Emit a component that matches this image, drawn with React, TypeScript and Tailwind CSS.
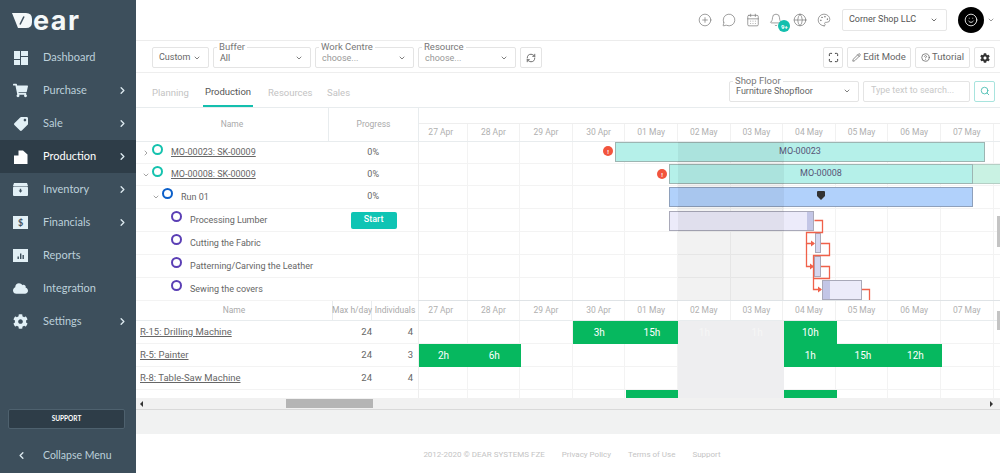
import {
  Bell,
  CalendarDays,
  ChevronDown,
  ChevronLeft,
  ChevronRight,
  CirclePlus,
  Globe,
  CircleHelp,
  Maximize,
  MessageCircle,
  Palette,
  Pencil,
  RefreshCw,
  Search,
  Smile,
} from 'lucide-react';
import { FaCloud, FaCog, FaShoppingCart, FaTag } from 'react-icons/fa';
import type { ReactNode } from 'react';

const plex = "font-['Roboto','Noto_Sans',sans-serif]";

const DashboardIcon = () => (
  <svg width="14" height="14" viewBox="0 0 14 14" fill="#e2f0f6">
    <rect x="0" y="0" width="6" height="8" />
    <rect x="7" y="0" width="7" height="5" />
    <rect x="7" y="6" width="7" height="8" />
    <rect x="0" y="9" width="6" height="5" />
  </svg>
);

const ProductionIcon = () => (
  <svg width="14" height="14" viewBox="0 0 14 14" fill="#fff">
    <path d="M0 5.5 L4.5 5.5 L4.5 0.5 L9 0.5 L13.5 4.5 L13.5 14 L0 14 Z" />
  </svg>
);

const InventoryIcon = () => (
  <svg width="15" height="13" viewBox="0 0 15 13">
    <path d="M1 0 H14 L15 3 H0 Z" fill="#e2f0f6" />
    <rect x="0" y="3.6" width="15" height="9.4" rx="1" fill="#e2f0f6" />
    <path d="M7.5 9.8 L5.6 7.6 H6.8 V5.8 H8.2 V7.6 H9.4 Z" fill="#3d4f5c" />
  </svg>
);

const FinancialsIcon = () => (
  <div className="w-[15px] h-[13px] bg-[#e2f0f6] flex items-center justify-center text-[9px] font-bold leading-none text-[#3d4f5c]">
    $
  </div>
);

const ReportsIcon = () => (
  <svg width="15" height="13" viewBox="0 0 15 13">
    <rect width="15" height="13" fill="#e2f0f6" />
    <rect x="4.5" y="7.5" width="1.4" height="2.5" fill="#3d4f5c" />
    <rect x="7" y="4.5" width="1.4" height="5.5" fill="#3d4f5c" />
    <rect x="9.5" y="6" width="1.4" height="4" fill="#3d4f5c" />
  </svg>
);

const navItems: { label: string; icon: ReactNode; arrow?: boolean; active?: boolean }[] = [
  { label: 'Dashboard', icon: <DashboardIcon /> },
  { label: 'Purchase', icon: <FaShoppingCart size={15} color="#e2f0f6" />, arrow: true },
  { label: 'Sale', icon: <FaTag size={14} color="#e2f0f6" className="-scale-x-100" />, arrow: true },
  { label: 'Production', icon: <ProductionIcon />, arrow: true, active: true },
  { label: 'Inventory', icon: <InventoryIcon />, arrow: true },
  { label: 'Financials', icon: <FinancialsIcon />, arrow: true },
  { label: 'Reports', icon: <ReportsIcon /> },
  { label: 'Integration', icon: <FaCloud size={15} color="#e2f0f6" /> },
  { label: 'Settings', icon: <FaCog size={15} color="#e2f0f6" />, arrow: true },
];

function Sidebar() {
  return (
    <aside className="w-[136px] shrink-0 h-full bg-[#3d4f5c] flex flex-col font-['Lato',sans-serif]">
      <div className="h-[41px] flex items-start pl-[12px] pt-[10px] gap-[1px]">
        <svg width="20" height="15" viewBox="0 0 20 15" className="mt-[3px]">
          <path d="M0 0 H14 Q20 0 20 6 V9 Q20 15 14 15 H6 Z" fill="#f4f8f9" />
          <path d="M12 3.5 L8 11.5" stroke="#3d4f5c" strokeWidth="1.6" />
        </svg>
        <span className="font-['Inter',sans-serif] text-[27px] leading-[22px] font-bold text-[#f4f8f9] tracking-[1.5px]">ear</span>
      </div>
      <nav className="flex flex-col">
        {navItems.map((item) => (
          <div
            key={item.label}
            className={`h-[33px] flex items-center text-[11px] ${item.active ? 'bg-[#2e3d48] text-white' : 'text-[#bcd0da]'}`}
          >
            <div className="w-[43px] flex items-center justify-center pr-[2px]">{item.icon}</div>
            <span className="flex-1">{item.label}</span>
            {item.arrow && <ChevronRight size={11} strokeWidth={3} color="#dbe8ee" className="mr-[8px]" />}
          </div>
        ))}
      </nav>
      <div className="mt-auto ml-[8px] mr-[11px] h-[20px] rounded-[2px] bg-[#2e3d48] border border-[#4e616e] flex items-center justify-center text-[6.5px] font-bold text-white">
        SUPPORT
      </div>
      <div className="h-[36px] mt-[8px] pt-[1px] flex items-center text-[10.5px] text-[#bcd0da]">
        <div className="w-[43px] flex justify-center">
          <ChevronLeft size={11} strokeWidth={3} color="#dbe8ee" />
        </div>
        Collapse Menu
      </div>
    </aside>
  );
}

function TopBar() {
  return (
    <header className="h-[41px] shrink-0 border-b border-[#ececec] flex items-center justify-end text-[#777]">
      <div className="flex items-center gap-[9.8px] mr-[11px]">
        <CirclePlus size={14} strokeWidth={1.2} />
        <MessageCircle size={14} strokeWidth={1.2} />
        <CalendarDays size={14} strokeWidth={1.2} />
        <div className="relative">
          <Bell size={14} strokeWidth={1.2} />
          <span className="absolute -right-[7px] -bottom-[5px] w-[12px] h-[12px] rounded-full bg-[#14bfae] text-white text-[6px] font-bold flex items-center justify-center">
            9+
          </span>
        </div>
        <Globe size={14} strokeWidth={1.2} />
        <Palette size={14} strokeWidth={1.2} />
      </div>
      <div className="w-[105px] h-[22px] border border-[#e6e6e6] rounded-[2px] flex items-center justify-between pl-[6px] pr-[8px] text-[9px] text-[#555]">
        Corner Shop LLC
        <ChevronDown size={8} strokeWidth={2.5} />
      </div>
      <div className="w-[26px] h-[26px] ml-[11px] rounded-full bg-black flex items-center justify-center">
        <Smile size={14} color="#e8e8e8" strokeWidth={1.6} />
      </div>
      <ChevronDown size={8} strokeWidth={2.5} className="ml-[3px] mr-[5px] text-[#888]" />
    </header>
  );
}

function LegendSelect({ label, value, width, faded }: { label?: string; value: string; width: string; faded?: boolean }) {
  return (
    <div className={`relative ${width} h-[21px] border border-[#e4e4e4] rounded-[2px] flex items-center justify-between pl-[6px] pr-[7px]`}>
      {label && (
        <span className="absolute left-[3px] -top-[6px] bg-white px-[2px] text-[9.5px] leading-[10px] text-[#777]">{label}</span>
      )}
      <span className={`text-[9px] ${label ? 'pt-[2px]' : ''} ${faded ? 'text-[#999]' : 'text-[#666]'}`}>{value}</span>
      <ChevronDown size={8} strokeWidth={2.5} className="text-[#666]" />
    </div>
  );
}

function ToolBar() {
  return (
    <div className="h-[32px] shrink-0 border-b border-[#eeeeee] flex items-center pl-[16px] pr-[5px] pt-[2px]">
      <div className="flex items-center gap-[4px]">
        <LegendSelect value="Custom" width="w-[57px]" />
        <LegendSelect label="Buffer" value="All" width="w-[98px]" />
        <LegendSelect label="Work Centre" value="choose..." width="w-[99px]" faded />
        <LegendSelect label="Resource" value="choose..." width="w-[98px]" faded />
        <div className="w-[22px] h-[21px] border border-[#e4e4e4] rounded-[2px] flex items-center justify-center text-[#555]">
          <RefreshCw size={10} />
        </div>
      </div>
      <div className="ml-auto flex items-center gap-[4px] text-[9.5px] text-[#666]">
        <div className="w-[20px] h-[21px] border border-[#e4e4e4] rounded-[2px] flex items-center justify-center text-[#333]">
          <Maximize size={11} />
        </div>
        <div className="w-[64px] h-[21px] border border-[#e4e4e4] rounded-[2px] flex items-center justify-center gap-[2px]">
          <Pencil size={9} />
          Edit Mode
        </div>
        <div className="w-[55px] h-[21px] border border-[#e4e4e4] rounded-[2px] flex items-center justify-center gap-[2px]">
          <CircleHelp size={9} />
          Tutorial
        </div>
        <div className="w-[21px] h-[21px] border border-[#e4e4e4] rounded-[2px] flex items-center justify-center text-[#333]">
          <FaCog size={10} />
        </div>
      </div>
    </div>
  );
}

function TabsBar() {
  return (
    <div className="h-[35px] shrink-0 border-b border-[#e8ecee] flex pl-[16px] pr-[5px] text-[9.5px] text-[#c3c3c3]">
      <div className="flex gap-[13px] items-stretch">
        <span className="w-[38px] flex items-center pt-[6px]">Planning</span>
        <span className="w-[50px] flex items-center justify-center pt-[6px] text-[#555] border-b-2 border-[#14bfae]">Production</span>
        <span className="w-[42px] ml-[2px] flex items-center pt-[6px]">Resources</span>
        <span className="ml-[4px] flex items-center pt-[6px]">Sales</span>
      </div>
      <div className="ml-auto flex items-center gap-[4px] pt-[2px]">
        <div className="w-[130px]">
          <LegendSelect label="Shop Floor" value="Furniture Shopfloor" width="w-[130px]" />
        </div>
        <div className="w-[107px] h-[21px] border border-[#e4e4e4] rounded-[2px] flex items-center pl-[7px] text-[9px] text-[#c8c8c8]">
          Type text to search...
        </div>
        <div className="w-[21px] h-[21px] border border-[#a8e4de] rounded-[2px] flex items-center justify-center text-[#3fb9ad]">
          <Search size={10} />
        </div>
      </div>
    </div>
  );
}

const days = ['27 Apr', '28 Apr', '29 Apr', '30 Apr', '01 May', '02 May', '03 May', '04 May', '05 May', '06 May', '07 May'];

function DayLabels({ className }: { className: string }) {
  return (
    <div className={`flex -ml-[4px] ${className}`}>
      {days.map((d) => (
        <div key={d} className="w-[52.6px] shrink-0 flex items-center justify-center border-r border-[#f1f1f1] text-[8.5px] text-[#b0b0b0]">
          {d}
        </div>
      ))}
    </div>
  );
}

function GridLines() {
  return (
    <div className="absolute inset-0 flex -ml-[4px]">
      {days.map((d) => (
        <div key={d} className="w-[52.6px] shrink-0 border-r border-[#f3f3f3]" />
      ))}
    </div>
  );
}

const taskRows = [
  { h: 'h-[22px]', name: 'MO-00023: SK-00009', pl: 'pl-[6px]', ring: 'border-[#14c2ae]', chevron: 'right', link: true, progress: '0%' },
  { h: 'h-[22px]', name: 'MO-00008: SK-00009', pl: 'pl-[6px]', ring: 'border-[#14c2ae]', chevron: 'down', link: true, progress: '0%' },
  { h: 'h-[23px]', name: 'Run 01', pl: 'pl-[16px]', ring: 'border-[#0b5fc9]', chevron: 'down', progress: '0%' },
  { h: 'h-[23px]', name: 'Processing Lumber', pl: 'pl-[35px]', ring: 'border-[#5b3fb5]', start: true },
  { h: 'h-[23px]', name: 'Cutting the Fabric', pl: 'pl-[35px]', ring: 'border-[#5b3fb5]' },
  { h: 'h-[23px]', name: 'Patterning/Carving the Leather', pl: 'pl-[35px]', ring: 'border-[#5b3fb5]' },
  { h: 'h-[23px]', name: 'Sewing the covers', pl: 'pl-[35px]', ring: 'border-[#5b3fb5]' },
];

function TaskRow({ row }: { row: (typeof taskRows)[number] }) {
  return (
    <div className={`${row.h} flex items-center border-b border-[#f3f3f3] text-[9px] text-[#666]`}>
      <div className={`w-[193px] flex items-center ${row.pl}`}>
        {row.chevron && (
          <span className="w-[10px] text-[#777]">
            {row.chevron === 'right' ? <ChevronRight size={8} strokeWidth={2} /> : <ChevronDown size={8} strokeWidth={2} />}
          </span>
        )}
        <span className={`w-[11px] h-[11px] rounded-full border-[2.5px] mb-[7px] ${row.ring}`} />
        <span className={`ml-[8px] pt-[1px] ${row.link ? 'underline' : ''}`}>{row.name}</span>
      </div>
      <div className="w-[90px] flex items-center justify-center">
        {row.progress}
        {row.start && (
          <span className="w-[46px] h-[17px] ml-[1px] rounded-[2px] bg-[#0fc4b4] text-white flex items-center justify-center font-medium">Start</span>
        )}
      </div>
    </div>
  );
}

function Alert({ className }: { className: string }) {
  return (
    <span className={`absolute w-[10px] h-[10px] rounded-full bg-[#f2543d] text-white text-[6px] font-bold flex items-center justify-center ${className}`}>
      !
    </span>
  );
}

const RED = '#f0614a';

function TaskChart() {
  return (
    <div className="relative flex-1 overflow-hidden">
      <GridLines />
      <div className="absolute inset-0">
        {taskRows.map((r) => (
          <div key={r.name} className={`${r.h} border-b border-[#f3f3f3]`} />
        ))}
      </div>
      <Alert className="left-[184px] top-[4px]" />
      <div className="absolute left-[196px] top-0 w-[370px] h-[20px] bg-[#b5f0e9] border border-[#9db5b2] flex items-center justify-center text-[9px] text-[#557]">
        MO-00023
      </div>
      <Alert className="left-[238px] top-[27px]" />
      <div className="absolute left-[250px] top-[22px] w-[304px] h-[20px] bg-[#b5f0e9] border border-[#9db5b2] flex items-center justify-center text-[9px] text-[#557]">
        MO-00008
      </div>
      <div className="absolute left-[554px] top-[22px] w-[40px] h-[20px] bg-[#c9f2e3] border-y border-[#b5cfc5]" />
      <div className="absolute left-[250px] top-[45px] w-[304px] h-[20px] bg-[#b1d1fb] border border-[#8ea0bb] flex items-center justify-center pb-[3px]">
        <svg width="8" height="9" viewBox="0 0 8 9">
          <path d="M0 1 Q0 0 1 0 H7 Q8 0 8 1 V5 L4 9 L0 5 Z" fill="#333" />
        </svg>
      </div>
      <div className="absolute left-[250px] top-[69px] w-[145px] h-[20px] bg-[#ecebfa] border border-[#a9a9b9] flex justify-end">
        <div className="w-[6px] h-full bg-[#c3c6e6]" />
      </div>
      <div className="absolute left-[396px] top-[91px] w-[6px] h-[20px] bg-[#d5d7f0] border border-[#a9a9b9]" />
      <div className="absolute left-[395px] top-[114px] w-[7px] h-[21px] bg-[#d5d7f0] border border-[#a9a9b9]" />
      <div className="absolute left-[403px] top-[138px] w-[40px] h-[20px] bg-[#ecebfa] border border-[#a9a9b9]">
        <div className="w-[7px] h-full bg-[#c3c6e6]" />
      </div>
      <svg className="absolute inset-0 w-full h-full" fill="none">
        <path d="M395.5 78.5 H403.5 V90.5 H387.5 V101.5 H395" stroke={RED} strokeWidth="1.3" />
        <path d="M387.5 101.5 V124.5 H394" stroke={RED} strokeWidth="1.3" />
        <path d="M402 101.5 H410.5 V113.5 H394.5 V147.5 H402" stroke={RED} strokeWidth="1.3" />
        <path d="M402 124.5 H410.5 V136.5 H394.5" stroke={RED} strokeWidth="1.3" />
        <path d="M443 147.5 H450.5 V159" stroke={RED} strokeWidth="1.3" />
        <path d="M396 101.5 L392 98.5 V104.5 Z" fill={RED} />
        <path d="M395 124.5 L391 121.5 V127.5 Z" fill={RED} />
        <path d="M403 147.5 L399 144.5 V150.5 Z" fill={RED} />
      </svg>
      <div className="absolute left-[259px] top-0 w-[105.5px] h-full bg-black/5" />
    </div>
  );
}

const resources = [
  { name: 'R-15: Drilling Machine', max: 24, ind: 4 },
  { name: 'R-5: Painter', max: 24, ind: 3 },
  { name: 'R-8: Table-Saw Machine', max: 24, ind: 4 },
];

const GreenCell = ({ className, children }: { className: string; children?: ReactNode }) => (
  <div className={`absolute bg-[#06b85f] text-white text-[10px] flex items-center justify-center ${className}`}>{children}</div>
);

function ResourceChart() {
  return (
    <div className="relative flex-1 overflow-hidden">
      <GridLines />
      <div className="absolute inset-0">
        <div className="h-[23px] border-b border-[#f3f3f3]" />
        <div className="h-[23px] border-b border-[#f3f3f3]" />
        <div className="h-[23px] border-b border-[#f3f3f3]" />
      </div>
      <div className="absolute left-[259px] top-0 w-[105.5px] h-full bg-[#eeeef0] flex">
        <span className="w-1/2 h-[23px] flex items-center justify-center text-[10px] text-[#f6f6f6]">1h</span>
        <span className="w-1/2 h-[23px] flex items-center justify-center text-[10px] text-[#f6f6f6]">1h</span>
      </div>
      <GreenCell className="left-[154px] top-0 w-[52.6px] h-[23px]">3h</GreenCell>
      <GreenCell className="left-[206.6px] top-0 w-[52.6px] h-[23px]">15h</GreenCell>
      <GreenCell className="left-[365px] top-0 w-[52.6px] h-[23px]">10h</GreenCell>
      <GreenCell className="left-0 top-[23px] w-[49px] h-[23px]">2h</GreenCell>
      <GreenCell className="left-[49px] top-[23px] w-[52.6px] h-[23px]">6h</GreenCell>
      <GreenCell className="left-[365px] top-[23px] w-[52.6px] h-[23px]">1h</GreenCell>
      <GreenCell className="left-[417.6px] top-[23px] w-[52.6px] h-[23px]">15h</GreenCell>
      <GreenCell className="left-[470.2px] top-[23px] w-[52.6px] h-[23px]">12h</GreenCell>
      <GreenCell className="left-[206.6px] top-[69px] w-[52.6px] h-[8px]" />
      <GreenCell className="left-[365px] top-[69px] w-[52.6px] h-[8px]" />
    </div>
  );
}

function GanttPanel() {
  return (
    <div className={`flex flex-col ${plex}`}>
      <div className="h-[34px] flex border-b border-[#e8ecee] text-[8.5px] text-[#aaa]">
        <div className="w-[193px] flex items-center justify-center border-r border-[#e8ecee]">Name</div>
        <div className="w-[90px] flex items-center justify-center border-r border-[#e8ecee]">Progress</div>
        <div className="flex-1 flex flex-col overflow-hidden">
          <div className="h-[16px] border-b border-[#eeeeee]" />
          <DayLabels className="flex-1" />
        </div>
      </div>
      <div className="flex h-[159px] border-b border-[#dfe3e6]">
        <div className="w-[283px] shrink-0 border-r border-[#eeeeee]">
          {taskRows.map((r) => (
            <TaskRow key={r.name} row={r} />
          ))}
        </div>
        <TaskChart />
      </div>
      <div className="h-[20px] flex border-b border-[#e8ecee] text-[8.5px] text-[#aaa]">
        <div className="w-[197px] flex items-center justify-center border-r border-[#e8ecee]">Name</div>
        <div className="w-[39px] flex items-center justify-center whitespace-nowrap border-r border-[#e8ecee]">Max h/day</div>
        <div className="w-[47px] flex items-center justify-center border-r border-[#e8ecee]">Individuals</div>
        <div className="flex-1 overflow-hidden">
          <DayLabels className="h-full" />
        </div>
      </div>
      <div className="flex h-[77px]">
        <div className="w-[283px] shrink-0 border-r border-[#eeeeee] text-[9.5px] text-[#666]">
          {resources.map((r) => (
            <div key={r.name} className="h-[23px] flex items-center border-b border-[#f3f3f3] pl-[4px]">
              <span className="w-[224px] underline">{r.name}</span>
              <span className="w-[8px] mr-[35px] whitespace-nowrap flex justify-end">{r.max}</span>
              <span className="w-[6px] text-right">{r.ind}</span>
            </div>
          ))}
        </div>
        <ResourceChart />
      </div>
    </div>
  );
}

function ScrollBar() {
  return (
    <div className="h-[12px] bg-[#f1f1f1] border-b border-[#d9d9d9] flex items-center pl-[4px] pr-[7px]">
      <span className="w-0 h-0 border-y-[3px] border-y-transparent border-r-[3px] border-r-[#333]" />
      <div className="ml-[143px] w-[87px] h-[9px] bg-[#b5b5b5]" />
      <span className="ml-auto w-0 h-0 border-y-[3px] border-y-transparent border-l-[3px] border-l-[#333]" />
    </div>
  );
}

export default function App() {
  return (
    <div className="w-[1000px] h-[473px] flex overflow-hidden bg-white">
      <Sidebar />
      <main className={`relative flex-1 min-w-0 flex flex-col ${plex}`}>
        <TopBar />
        <ToolBar />
        <TabsBar />
        <GanttPanel />
        <ScrollBar />
        <div className="h-[24px] bg-[#f1f2f2] shrink-0" />
        <footer className="flex-1 flex items-center justify-center gap-[17px] pl-[8px] pt-[2px] text-[8px] text-[#c4c4c4]">
          <span>2012-2020 © DEAR SYSTEMS FZE</span>
          <span>Privacy Policy</span>
          <span>Terms of Use</span>
          <span>Support</span>
        </footer>
        <div className="absolute right-0 top-[216px] w-[3px] h-[31px] bg-[#c4c4c4]" />
        <div className="absolute right-0 top-[311px] w-[3px] h-[19px] bg-[#c4c4c4]" />
      </main>
    </div>
  );
}
